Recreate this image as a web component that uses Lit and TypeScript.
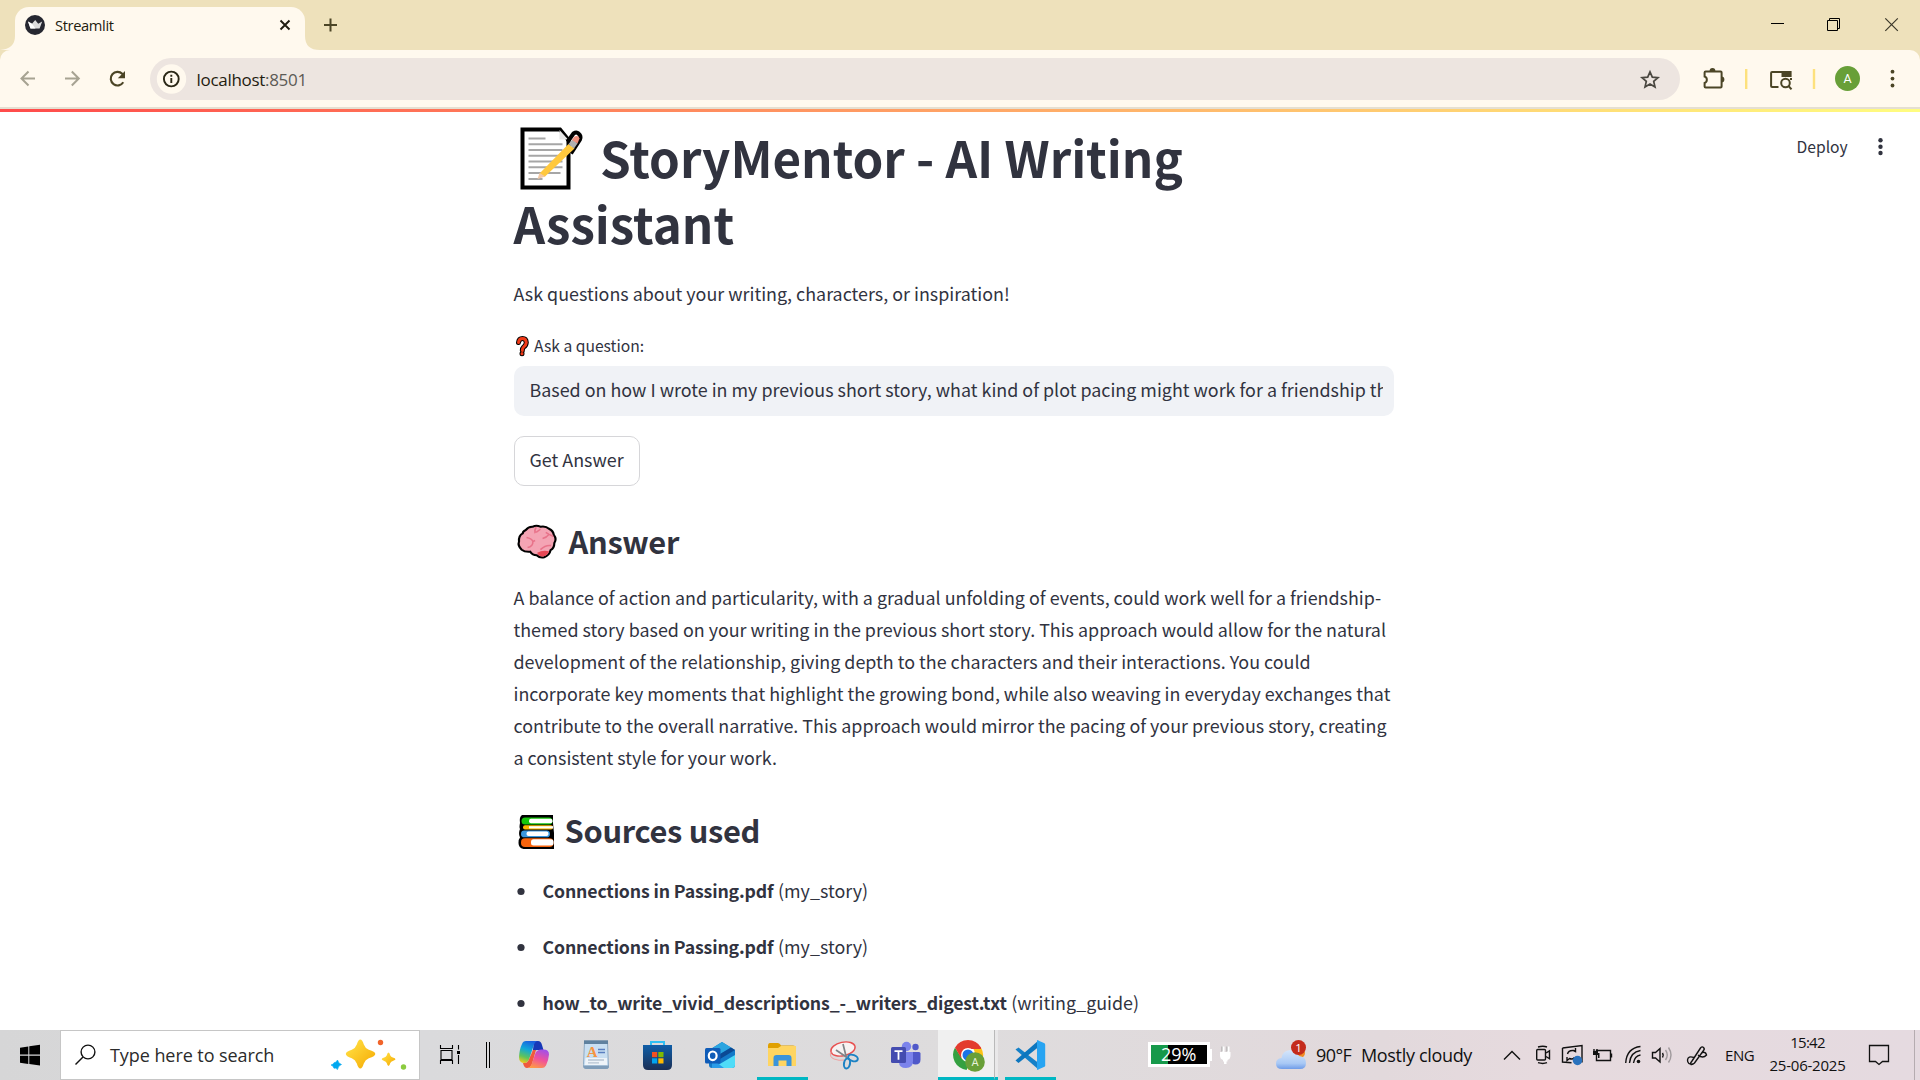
import { LitElement, html, svg, css } from "lit";
import { customElement } from "lit/decorators.js";

// Icon whose drawing coordinates start at (x, y) of the window.
const icon = (x: number, y: number, w: number, h: number, body: unknown) =>
  html`<svg class="ic" width=${w} height=${h} viewBox="${x} ${y} ${w} ${h}" fill="none">${body}</svg>`;

const question =
  "Based on how I wrote in my previous short story, what kind of plot pacing might work for a friendship th";

const answerLines = [
  "A balance of action and particularity, with a gradual unfolding of events, could work well for a friendship-",
  "themed story based on your writing in the previous short story. This approach would allow for the natural",
  "development of the relationship, giving depth to the characters and their interactions. You could",
  "incorporate key moments that highlight the growing bond, while also weaving in everyday exchanges that",
  "contribute to the overall narrative. This approach would mirror the pacing of your previous story, creating",
  "a consistent style for your work.",
];

const sources = [
  ["Connections in Passing.pdf", "(my_story)"],
  ["Connections in Passing.pdf", "(my_story)"],
  ["how_to_write_vivid_descriptions_-_writers_digest.txt", "(writing_guide)"],
];

@customElement("browser-chrome")
class BrowserChrome extends LitElement {
  static styles = css`
    :host { display: block; font-family: "Open Sans", "Noto Sans", sans-serif; color: #1f1c10; }
    .ic { display: block; flex: none; }
    .strip { height: 50px; background: #eee1bb; display: flex; }
    .tab { width: 290px; height: 43px; margin-top: 7px; background: #fff9ee; border-radius: 14px 14px 0 0; display: flex; align-items: flex-start; box-sizing: border-box; padding-left: 9px; }
    .tab-title { font-size: 14.7px; line-height: 20px; margin: 8px 0 0 9px; width: 219px; white-space: nowrap; letter-spacing: -0.37px; }
    .grow { flex: 1; }
    .corner { background: #eee1bb; }
    .bar { height: 57px; background: #fff9ee; display: flex; border-radius: 10px 10px 0 0; }
    .omni { margin-top: 8px; width: 1530px; height: 42px; border-radius: 21px; background: #ede5e0; display: flex; }
    .url { font-size: 17px; line-height: 43px; margin-left: 9.5px; width: 1437.5px; color: #5c5a55; white-space: nowrap; letter-spacing: -0.3px; }
    .host { color: #1f1c10; }
    .line { height: 2px; background: #e5dfd1; }
  `;
  render() {
    return html`
      <div class="strip">
        ${icon(0, 0, 15, 50, svg`<path d="M0 50Q15 49 15 36V50Z" fill="#fff9ee"/>`)}
        <div class="tab">
          ${icon(24, 7, 22, 36, svg`<circle cx="35" cy="25" r="10" fill="#262730"/><path d="M28 21.500l4 2.200 3.200-3.600 3 3.600 4-2.200-2.600 7H30.500z" fill="#ddd"/><path d="M28 21.500l4 2.200 3.500 4.800h-5z" fill="#fff"/>`)}
          <span class="tab-title">Streamlit</span>
          ${icon(274, 7, 22, 36, svg`<path d="M280.500 20.500l9 9m0-9l-9 9" stroke="#1f1c10" stroke-width="1.900"/>`)}
        </div>
        ${icon(305, 0, 40, 50, svg`<path d="M305 36Q305 50 320 50H305Z" fill="#fff9ee"/><path d="M324 25h13M330.500 18.500v13" stroke="#4b4526" stroke-width="2"/>`)}
        <span class="grow"></span>
        ${icon(1760, 0, 160, 50, svg`<path d="M1771 23.500h13" stroke="#000"/><path d="M1827.500 20.500h10v10h-10zM1829.500 20v-1.500h10v10h-1.500" stroke="#000"/><path d="M1885.300 18.300l12.500 12.500m0-12.500l-12.500 12.500" stroke="#3a3729" stroke-width="1.200"/>`)}
      </div>
      <div class="corner"><div class="bar">
        ${icon(0, 50, 150, 57, svg`
          <g stroke="#a7a392" stroke-width="2"><path d="M35 78.500H22M28.500 71.500l-7 7 7 7"/><path d="M65 78.500h13M71.800 71.500l7 7-7 7"/></g>
          <path d="M123.300 82.300A6.800 6.800 0 1 1 122.300 73.800l1.500 1.700" stroke="#4b4526" stroke-width="2.100"/><path d="M125 71v7.200h-7.200z" fill="#4b4526"/>`)}
        <div class="omni">
          ${icon(150, 58, 37, 42, svg`<circle cx="171.500" cy="79" r="14.700" fill="#fff9ee"/><circle cx="171.300" cy="79" r="7.400" stroke="#2b2817" stroke-width="1.900"/><path d="M171.300 78v5M171.300 74.800v1.900" stroke="#2b2817" stroke-width="1.900"/>`)}
          <span class="url"><span class="host">localhost</span>:8501</span>
          ${icon(1634, 58, 32, 42, svg`<path d="M1650 71.800l2.300 5.300 5.700.5-4.300 3.800 1.300 5.600-5-3-5 3 1.300-5.600-4.300-3.800 5.700-.5z" stroke="#4a4740" stroke-width="1.700"/>`)}
        </div>
        ${icon(1680, 50, 240, 57, svg`
          <path d="M1704.600 72.500q0-1 1-1h15q1 0 1 1v14q0 1-1 1h-15q-1 0-1-1v-3.600a3.400 3.400 0 0 0 0-6.400z" stroke="#4b4526" stroke-width="2"/>
          <path d="M1709.600 71a2.900 2.900 0 0 1 5.800 0zM1721.500 76.500a2.900 2.900 0 0 1 0 5.800z" fill="#4b4526"/>
          <path d="M1746.200 69v20M1814 69v20" stroke="#fde17d" stroke-width="2.400"/>
          <path d="M1778.500 87h-6.400q-1 0-1-1V73q0-1 1-1h18.500v5M1791 80v-2" stroke="#4b4526" stroke-width="2"/><path d="M1781.500 71h8q1.500 0 1.500 1.500V77h-9.500z" fill="#4b4526"/>
          <circle cx="1785.500" cy="83" r="4.300" stroke="#4b4526" stroke-width="2"/><path d="M1788.500 86l3 3.300" stroke="#4b4526" stroke-width="2"/>
          <circle cx="1847.500" cy="78.500" r="12.500" fill="#689f38"/><text x="1847.500" y="83.200" text-anchor="middle" font-size="12.500" font-family="Roboto" fill="#fff">A</text>
          <g fill="#4b4526"><circle cx="1892.500" cy="71.700" r="1.900"/><circle cx="1892.500" cy="78.600" r="1.900"/><circle cx="1892.500" cy="85.500" r="1.900"/></g>`)}
      </div></div>
      <div class="line"></div>`;
  }
}

@customElement("story-page")
class StoryPage extends LitElement {
  static styles = css`
    :host { display: block; background: #fff; color: #31333f; font-family: "Noto Sans CJK SC", "Noto Sans", sans-serif; font-size: 17.9px; line-height: 32px; overflow: hidden; }
    .deco { height: 3px; background: linear-gradient(90deg, #ff4b4b, #fffd80); }
    .cols { display: grid; grid-template-columns: 513.5px 881px 1fr; height: 918px; }
    .mid { grid-column: 2; }
    .ic { display: block; flex: none; }
    h1, h3, p, ul { margin: 0; padding: 0; white-space: nowrap; }
    h1 { font-size: 49.3px; line-height: 66px; font-weight: 700; margin-top: 12px; }
    .row { display: flex; align-items: flex-start; }
    .intro { margin-top: 21px; }
    .label { margin-top: 24px; font-size: 15.67px; line-height: 26px; height: 24px; }
    .input { display: flex; margin: 9px 0 0 0.5px; width: 880px; height: 50px; box-sizing: border-box; border-radius: 10px; background: #f0f2f6; padding: 0 11px 0 15.5px; }
    .field { width: 853px; height: 46px; border: 0; padding: 0; margin: 0; background: none; font: inherit; color: inherit; outline: none; }
    .btn { display: block; margin: 20px 0 0 0.5px; width: 126px; height: 50px; box-sizing: border-box; border: 1px solid #d6d6d9; border-radius: 10px; background: #fff; color: inherit; font: inherit; line-height: 42px; padding: 0 0 5px 14.5px; text-align: left; white-space: nowrap; }
    h3 { font-size: 30.8px; line-height: 44px; height: 42px; font-weight: 700; letter-spacing: -0.3px; }
    .h-answer { margin-top: 33px; }
    .answer { margin-top: 20px; }
    .h-sources { margin-top: 35px; }
    ul { list-style: none; margin-top: 24px; display: flex; flex-direction: column; gap: 24px; }
    li { display: flex; height: 32px; }
    b { font-weight: 700; font-size: 17.7px; letter-spacing: -0.15px; margin-right: 4.5px; }
    .side { display: flex; align-items: flex-start; padding: 22px 0 0 402px; font-size: 15.67px; line-height: 26px; }
    .deploy { width: 76px; }
  `;
  render() {
    return html`
      <div class="deco"></div>
      <div class="cols">
        <main class="mid">
          <h1>
            <div class="row">
              ${icon(513.5, 124, 86.5, 66, svg`
                <path d="M522 129.500h37.500l8.500 10.500v47.500h-46z" fill="#fff" stroke="#000" stroke-width="4"/>
                <path d="M559 130v9.500h8.500z" fill="#e6e6e6"/>
                <path d="M567 142l6-8.500q3-2 5 0 3 2.500 1.500 6l-9 14" stroke="#000" stroke-width="4"/>
                <path d="M528 138.500h17M528 144.300h34M528 150h34M528 155.800h34M528 161.500h34M528 167.300h34M528 173h32M528 179h14" stroke="#a6a6a6" stroke-width="2"/>
                <path d="M568 144l6 4.500-30 28.500-5-3.500z" fill="#ffc83d"/><path d="M539 173l-2 6 8-2.500z" fill="#f3c9a5"/><path d="M568 144l4-4.500 5 4-3.500 5z" fill="#b0b0b0"/><path d="M571.500 140l2.500-3.500q4-1.500 5 2l-2 5z" fill="#ef8f7d"/>`)}
              <span>StoryMentor - AI Writing</span>
            </div>
            <div class="row">Assistant</div>
          </h1>
          <p class="intro row">Ask questions about your writing, characters, or inspiration!</p>
          <div class="label row">
            ${icon(513.5, 333, 20.5, 24, svg`
              <g stroke-linecap="round" stroke-linejoin="round"><path d="M518 342.500q.5-4 4-4t3.800 4q-.3 3-2.600 4.500-1.500 1.500-1.400 3.500M521.500 353.500v.2" stroke="#000" stroke-width="5"/>
              <path d="M518 342.500q.5-4 4-4t3.800 4q-.3 3-2.600 4.500-1.500 1.500-1.400 3.500M521.500 353.500v.2" stroke="#f03a17" stroke-width="3"/></g>`)}
            <span>Ask a question:</span>
          </div>
          <div class="input"><input class="field" .value=${question}></div>
          <button class="btn">Get Answer</button>
          <h3 class="h-answer row">
            ${icon(513.5, 519, 55, 42, svg`<g transform="translate(538 541.500) scale(1.070 1.020) translate(-539.200 -541)">
              <path d="M527 530q3-4 7-3.500 3-2 7 0 5-1 8 2 4 2 4.500 6 3 4 .5 8 0 5-3.500 7-1 5-6 7-4 1-7-2-4 0-6-3.500-5 .5-8-2-4-4-2.500-8-.5-6 3.500-8 0-2 2.500-3z" fill="#f4a4b4" stroke="#000" stroke-width="2"/>
              <path d="M538 552q5-3 11-1.500-1 4.500-6 5.200-4 0-5-3.700z" fill="#e74856"/>
              <path d="M528 537q5 1 6 4 0 5-5 6M534 541l2-1M537 527q-2 3-1 6M537 532l4-3M543 538q4-1 6-4M549 534l-3-2M549 534l4 2M541 549q5-5 10-4" stroke="#e8738a" stroke-width="1.500"/></g>`)}
            <span>Answer</span>
          </h3>
          <p class="answer">${answerLines.map((l) => html`<span class="row">${l}</span>`)}</p>
          <h3 class="h-sources row">
            ${icon(513.5, 808, 51, 42, svg`
              <path d="M521 815h31.500v8l1 10v16H523q-5-1-5-6 0-4 1.500-5.500-2-4 0-8.500-1-1.500 0-6-1-6 2-8z" fill="#000"/>
              <rect x="521" y="817.500" width="31" height="7" rx="3.500" fill="#16c60c"/><rect x="528.500" y="818.800" width="23.500" height="4.500" rx="2" fill="#fff"/>
              <rect x="522.500" y="825.300" width="30" height="4.300" rx="2" fill="#ffb900"/><rect x="528.500" y="826.200" width="24" height="2.200" fill="#fff"/>
              <rect x="520.500" y="830.500" width="29" height="6.800" rx="3.400" fill="#3a96dd"/><rect x="526" y="831.600" width="22" height="4.300" rx="2" fill="#fff"/>
              <rect x="520.500" y="838.300" width="32.500" height="8.800" rx="4" fill="#f7630c"/><rect x="530.500" y="839.300" width="22.500" height="6.200" rx="2.500" fill="#fff"/>`)}
            <span>Sources used</span>
          </h3>
          <ul>${sources.map(([name, kind]) => html`<li>${icon(513.5, 874, 29, 32, svg`<circle cx="520.500" cy="891.500" r="3.600" fill="#31333f"/>`)}<b>${name}</b><span>${kind}</span></li>`)}</ul>
        </main>
        <aside class="side">
          <span class="deploy">Deploy</span>
          ${icon(1873, 134, 16, 26, svg`<g fill="#31333f"><circle cx="1880.500" cy="140.300" r="2.200"/><circle cx="1880.500" cy="146.700" r="2.200"/><circle cx="1880.500" cy="153" r="2.200"/></g>`)}
        </aside>
      </div>`;
  }
}

@customElement("task-bar")
class TaskBar extends LitElement {
  static styles = css`
    :host { display: flex; height: 50px; background: linear-gradient(90deg, #d6d6d7 0, #dadadc 22%, #dedcdd 50%, #e2d9dc 72%, #e6dade 80%, #e5dae0 100%); font-family: "Open Sans", "Noto Sans", sans-serif; font-size: 18px; line-height: 50px; color: #111; white-space: nowrap; }
    .ic { display: block; flex: none; }
    .search { width: 360px; box-sizing: border-box; border: 1px solid #c6c6c6; background: #fff; display: flex; line-height: 48px; color: #2b2b2b; }
    .ph { width: 215px; letter-spacing: -0.07px; }
    .slot { box-sizing: border-box; height: 50px; flex: none; }
    .open { border-bottom: 3px solid #00b7c3; overflow: hidden; }
    .active { background: #f0f0f0; }
    .stack { width: 4px; background: #e9e8e9; border-left: 1px solid #b9b9b9; }
    .bat { width: 62px; height: 25px; margin: 12px 0 0 0; border: 3px solid #fff; box-sizing: border-box; line-height: 19px; background: linear-gradient(90deg, #16994a 17px, #000 17px); color: #fff; padding-left: 10px; }
    .temp { width: 45px; letter-spacing: -0.6px; }
    .cloudy { width: 139px; letter-spacing: -0.33px; }
    .eng { width: 35px; font-size: 15px; letter-spacing: -0.4px; }
    .clock { width: 95px; text-align: center; font-size: 15px; line-height: 23px; padding-top: 1px; height: 48px; letter-spacing: -0.22px; }
    .clock div { height: 23px; }
    .time { letter-spacing: -0.75px; }
    .edge { width: 5px; border-left: 1px solid #b5acb0; }
  `;
  render() {
    return html`
      ${icon(0, 1030, 60, 50, svg`<path d="M20 1047.700l8.300-1.200v8.100H20zM29.300 1046.300l10.700-1.500v9.800H29.300zM20 1055.700h8.300v8.200l-8.300-1.200zM29.300 1055.700H40v9.800l-10.700-1.500z" fill="#000"/>`)}
      <div class="search">
        ${icon(61, 1031, 49, 48, svg`<circle cx="88" cy="1052" r="6.900" stroke="#111" stroke-width="1.400"/><path d="M83 1057l-7.500 7.500" stroke="#111" stroke-width="1.400"/>`)}
        <span class="ph">Type here to search</span>
        ${icon(325, 1031, 94, 48, svg`
          <defs><linearGradient id="y" x1="0" y1="0" x2="1" y2="1"><stop offset=".2" stop-color="#ffd93b"/><stop offset="1" stop-color="#f5a800"/></linearGradient></defs>
          <path d="M360.300 1039.500q2 0 3.500 5 1.500 4 5 5.300 6.500 2 6.500 4.200t-6.500 4.200q-3.500 1.300-5 5.300-1.500 5-3.500 5t-3.500-5q-1.500-4-5-5.300-6-2-6-4.200t6-4.200q3.500-1.300 5-5.300 1.500-5 3.500-5z" fill="url(#y)"/>
          <path d="M388.500 1052.500q1 0 1.800 3 .7 1.500 2.500 2 2.700.8 2.700 1.700t-2.700 1.700q-1.800.6-2.500 2.100-.8 3-1.800 3t-1.800-3q-.7-1.500-2.500-2.100-2.500-.8-2.500-1.700t2.500-1.700q1.800-.5 2.500-2 .8-3 1.800-3z" fill="url(#y)"/>
          <path d="M337.500 1060q.8 3.500 4 4.500-3.300 1-4 5-2-2-3.500-1.200-.8-2.800-3-3.300 3-.8 3-2.300 2 .3 3.500-2.700z" fill="#00a8f0" stroke="#00a8f0" stroke-width=".6"/>
          <circle cx="380.500" cy="1042.500" r="2.700" fill="#f1642a"/><circle cx="403.500" cy="1067" r="2.700" fill="#8bcb3f"/>`)}
      </div>
      ${icon(420, 1030, 89, 50, svg`<g stroke="#000" stroke-width="1.100"><path d="M441 1050.500h11v9h-11zM440.500 1045v3.500h12V1045M440.500 1064v-3.500h12v3.500M458.500 1045v4.500M458.500 1055v9"/></g><path d="M457 1051h3v3h-3z" fill="#000"/><path d="M486.500 1042v26M489.500 1042v26" stroke="#000"/>`)}
      ${icon(509, 1030, 62, 50, svg`
        <defs><linearGradient id="c1" x1=".6" y1="0" x2=".3" y2="1"><stop offset="0" stop-color="#1a5fe0"/><stop offset=".4" stop-color="#10a8d8"/><stop offset=".75" stop-color="#5fc45a"/><stop offset="1" stop-color="#e8c920"/></linearGradient>
        <linearGradient id="c2" x1=".7" y1="0" x2=".3" y2="1"><stop offset="0" stop-color="#a24fe8"/><stop offset=".5" stop-color="#f0529c"/><stop offset="1" stop-color="#ff9b45"/></linearGradient></defs>
        <path d="M534 1041h4q3 0 4 4l1.500 5h-6q-4 0-5 4z" fill="#1738b8"/><path d="M526 1041h12q-3 0-4.500 5l-4 12q-1.500 5-5 5-5.500 0-5.500-6 .5-8 3-13 1-3 4-3z" fill="url(#c1)"/>
        <path d="M533 1050h3l-4 14q-1.500 4-5 4-3 0-4-5h2q3 0 4.500-5z" fill="#f05a3c"/><path d="M541.500 1049.500h2q5.500 0 5.500 5-.5 6-3 11-1.500 2.500-4 2.500h-14.500q3-.5 4.500-5l3.500-10q1.500-3.500 6-3.500z" fill="url(#c2)"/>`)}
      ${icon(571, 1030, 62, 50, svg`<path d="M584.500 1042h23l1 25q0 1.500-2 1.500h-21q-2.500 0-2-4z" fill="#c9dff2" stroke="#8fabc4"/><path d="M584 1040.300h24v3.700h-24z" fill="#5f819f"/><path d="M583.500 1065.500h25.500q0 3.500-3 3.500h-20q-3-.5-2.500-3.500z" fill="#7f9db9"/><path d="M585.500 1058h21.500v7h-22z" fill="#eef4f9"/><text x="586.800" y="1056.500" font-family="Liberation Serif" font-size="15" font-weight="700" fill="#f59542">A</text><path d="M598 1049.500h7M598 1052.500h7" stroke="#5a7fc0" stroke-width="1.500"/><path d="M588 1060h16M588 1062.800h11" stroke="#b6c4d2" stroke-width="1.300"/>`)}
      ${icon(633, 1030, 62, 50, svg`<defs><linearGradient id="s" x1="0" y1="0" x2="0" y2="1"><stop offset="0" stop-color="#0f5ea8"/><stop offset="1" stop-color="#1b2f55"/></linearGradient></defs><path d="M651 1047v-5h13v5" stroke="#2fc0f4" stroke-width="2"/><path d="M643 1045h29v20q0 5-5 5h-19q-5 0-5-5z" fill="url(#s)"/><path d="M652 1052h5.200v5.200H652z" fill="#f25022"/><path d="M658.300 1052h5.200v5.200h-5.200z" fill="#7fba00"/><path d="M652 1058.300h5.200v5.200H652z" fill="#00a4ef"/><path d="M658.300 1058.300h5.200v5.200h-5.200z" fill="#ffb900"/>`)}
      ${icon(695, 1030, 62, 50, svg`<path d="M709 1050l13-8 13 8v15q0 3-3 3h-20q-3 0-3-3z" fill="#1379c8"/><path d="M722 1042l9 5.500-15 9-5-7.500z" fill="#2ba5e0"/><path d="M735 1050l-20 12v-5l16-9.500z" fill="#0b4a94"/><path d="M735 1051v14q0 3-3 3h-19l22-13z" fill="#4fdcf8"/><path d="M712 1059l12 9h-12z" fill="#2a9ce8"/><rect x="705" y="1048" width="15.500" height="15.500" rx="1.500" fill="#0f5cb8"/><ellipse cx="712.700" cy="1055.800" rx="3.900" ry="4.300" stroke="#fff" stroke-width="2.200"/>`)}
      <div class="slot open">${icon(757, 1030, 51, 50, svg`<path d="M768 1046q0-3 2-3h8q2 0 3 2.500h12q3 0 3 2.500v18h-28z" fill="#e0a000"/><path d="M768 1048h10l3-2h15v20h-28z" fill="#ffd561"/><path d="M773.500 1066v-8q0-3 3-3h12q3 0 3 3v8h-5v-5.500h-8v5.500z" fill="#3a94dc"/>`)}</div>
      ${icon(808, 1030, 72, 50, svg`<ellipse cx="843" cy="1049" rx="12.300" ry="6.800" transform="rotate(-12 843 1049)" fill="#f7f2f2" stroke="#e85050" stroke-width="1.400"/><path d="M831 1052q-2 5 3 7 5 2 10 1" stroke="#efa0a0"/><path d="M836 1050l11 7.500M843 1044l3.500 14" stroke="#808488" stroke-width="1.700"/><ellipse cx="853" cy="1058" rx="5" ry="3" transform="rotate(20 853 1058)" stroke="#1c82c4" stroke-width="2"/><ellipse cx="847" cy="1063.500" rx="3" ry="5" transform="rotate(10 847 1063.500)" stroke="#1c82c4" stroke-width="2"/>`)}
      ${icon(880, 1030, 58, 50, svg`<circle cx="915.500" cy="1047" r="3.200" fill="#5059c9"/><circle cx="906.500" cy="1046.500" r="4.700" fill="#7b83eb"/><path d="M911 1052h8q1.500 0 1.500 1.500v6q0 5-5 5-4.500 0-4.500-5z" fill="#5059c9"/><path d="M900 1052h13v9q0 7-7 7t-7-6z" fill="#7b83eb"/><rect x="891" y="1047" width="15" height="16" rx="1.500" fill="#444cb0"/><path d="M894.500 1051.200h8M898.500 1051.200v8.500" stroke="#fff" stroke-width="1.800"/>`)}
      <div class="slot open active">${icon(938, 1030, 56, 50, svg`<circle cx="968" cy="1055" r="15" fill="#fff"/><path d="M955 1047.500a15 15 0 0 0 11.500 22.400l5.500-9.500-10-2z" fill="#34a040"/><path d="M981 1047.500a15 15 0 0 1-13 22.500l6.500-11q2-6-2-11.500z" fill="#fbc116"/><path d="M955 1047.500L961.500 1058.700 964 1049h17l0-1.500a15 15 0 0 0-26 0z" fill="#e33b2e"/><circle cx="968" cy="1055" r="7" fill="#fff"/><circle cx="968" cy="1055" r="5.500" fill="#1a73e8"/><circle cx="975" cy="1062" r="9.800" fill="#689f38"/><text x="975" y="1066" text-anchor="middle" font-family="Roboto" font-size="11" fill="#e8f2dc">A</text>`)}</div>
      <div class="slot open stack"></div>
      ${icon(998, 1030, 7, 50, svg``)}
      <div class="slot open">${icon(1005, 1030, 51, 50, svg`<path d="M1015.500 1049.500l3-2 20 15.500v6.500z" fill="#1580c8"/><path d="M1015.500 1060.500l3 2.500 20-16v-6.500z" fill="#0d76be"/><path d="M1037 1040l7.500 3.300q.7.500.7 1.500v20.500q0 1-.7 1.500L1037 1070z" fill="#27a4f2"/>`)}</div>
      ${icon(1056, 1030, 92, 50, svg``)}
      <div class="bat">29%</div>
      ${icon(1210, 1030, 106, 50, svg`
        <path d="M1210 1049h2v12h-2z" fill="#fff"/><path d="M1220 1052h10.500v3.500q0 3.500-3 4.500v1.500h-1v2.500h-2.500v-2.500h-1v-1.500q-3-1-3-4.500zM1222 1046.500h2.500v6H1222zM1227 1046.500h2.500v6h-2.500z" fill="#fff"/><path d="M1222 1046.500v5M1227 1046.500v5" stroke="#888" stroke-width=".7"/>
        <defs><linearGradient id="w" x1="0" y1="0" x2="0" y2="1"><stop offset="0" stop-color="#d6e6fb"/><stop offset=".7" stop-color="#a9c9f5"/><stop offset="1" stop-color="#6f9ce8"/></linearGradient></defs>
        <circle cx="1300" cy="1053" r="5" fill="#f08a24"/><path d="M1282 1069q-6 0-6-5.500 0-5 5.500-5.500 1-7.500 9-8 6 0 8.500 6 7 .5 7 7 0 6-6 6z" fill="url(#w)"/>
        <circle cx="1298.500" cy="1047.500" r="7.500" fill="#c42b1c"/><text x="1298.500" y="1051.700" text-anchor="middle" font-family="Open Sans" font-size="11.500" fill="#fff">1</text>`)}
      <span class="temp">90°F</span>
      <span class="cloudy">Mostly cloudy</span>
      ${icon(1500, 1030, 225, 50, svg`<g stroke="#111" stroke-width="1.400">
        <path d="M1504 1059.500l8-8 8 8"/>
        <rect x="1536.700" y="1049.500" width="8.800" height="10.500" rx="1"/><path d="M1546 1053l3.500-2.200v8l-3.500-2.300M1538 1047q5-1.500 9 0M1538 1062.700q5 1.500 9 0"/>
        <path d="M1562.500 1048l19.500-2.500v17M1562.500 1048v14l9 .8"/><path d="M1567.500 1054q1-4 6-3.500l2 1v-3.500M1567 1057v3.500l2.500-2q3 1.500 5-1"/>
        <path d="M1596.500 1050.500h14v10h-14zM1611.500 1053.500v4M1594 1049v2M1597 1049v2"/>
        <path d="M1625.700 1063q1-15 14.800-16.500M1629.500 1063q1-11 11-12.500M1633.500 1063q1-7 7-8"/>
        <path d="M1652.500 1052.500h3l4.500-4v13.500l-4.500-4h-3zM1662.500 1053q1.500 2.300 0 4.500"/><path d="M1665.500 1050q3.500 5 0 10M1668.500 1047.500q5 7.500 0 15" stroke="#a09a9d"/>
        <path d="M1692 1061l8.500-13q1.500-2 3-.5t0 3l-9 12.500q-2 2-3.500 1.500t1-3.500zM1694 1057.500q-6-2-6.500 2.500 0 5 5.500 4M1698 1055q5 4 8.500 0-1-4-5-2"/></g>
        <rect x="1593" y="1051" width="5" height="4" fill="#111"/><rect x="1598" y="1053" width="1.500" height="5" fill="#111"/><circle cx="1638.500" cy="1061.500" r="1.800" fill="#111"/><circle cx="1577.500" cy="1060.500" r="4.700" fill="#2a72bd"/>`)}
      <span class="eng">ENG</span>
      <div class="clock"><div class="time">15:42</div><div>25-06-2025</div></div>
      ${icon(1855, 1030, 59, 50, svg`<path d="M1869.500 1045.500h19v16h-6l-3.500 3-3.500-3h-6z" stroke="#111" stroke-width="1.300"/>`)}
      <div class="edge"></div>`;
  }
}

@customElement("app-root")
class AppRoot extends LitElement {
  static styles = css`
    :host { display: block; width: 1920px; height: 1080px; overflow: hidden; background: #fff; }
  `;
  render() {
    return html`<browser-chrome></browser-chrome><story-page></story-page><task-bar></task-bar>`;
  }
}
